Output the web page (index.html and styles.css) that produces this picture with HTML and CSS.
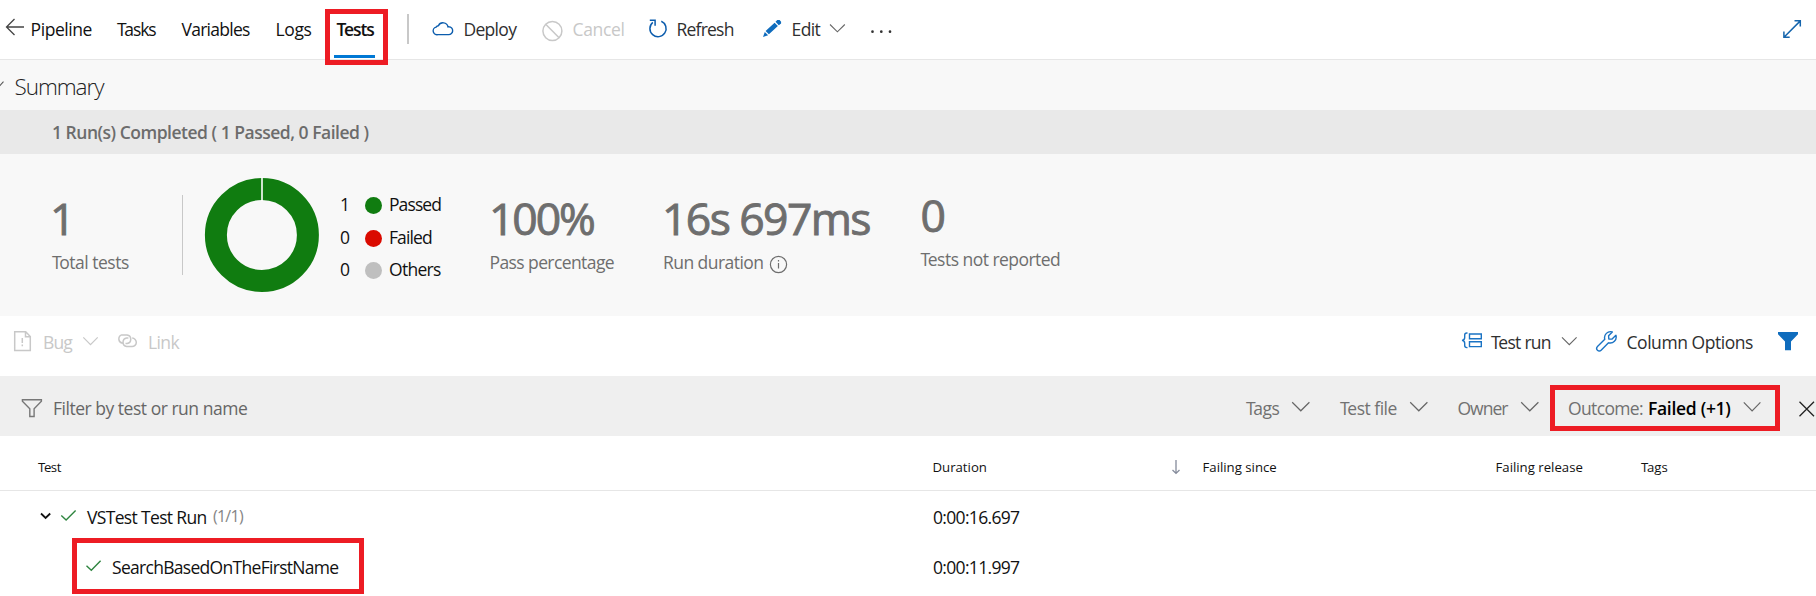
FILE: index.html
```html
<!DOCTYPE html>
<html lang="en">
<head>
<meta charset="utf-8">
<title>Release tests</title>
<link rel="stylesheet" href="styles.css">
</head>
<body>
<main class="page">
  <nav class="nav">
    <svg class="icon" width="30" height="59" viewBox="0 0 30 59"><path d="M24 27H6.5M14.5 19L6.5 27l8 8" fill="none" stroke="#444" stroke-width="1.3"/></svg>
    <span class="pipeline">Pipeline</span>
    <span class="tasks cap">Tasks</span>
    <span class="variables">Variables</span>
    <span class="logs">Logs</span>
    <span class="tests cap active">Tests</span>
    <i class="separator"></i>
    <svg class="icon" width="24" height="59" viewBox="432 0 24 59"><path d="M439 34.6h10.6a3.9 3.9 0 0 0 .3-7.8a1.8 1.8 0 0 0-.9.1a5.1 5.1 0 0 0-9.6-1.2a3 3 0 0 0-2.3 1.4a3.8 3.8 0 0 0 1.9 7.5z" fill="none" stroke="#0b5cad" stroke-width="1.4"/></svg>
    <span class="deploy dark">Deploy</span>
    <svg class="icon" width="24" height="59" viewBox="542 0 24 59"><g fill="none" stroke="#c8c8c8" stroke-width="1.5"><circle cx="553.4" cy="31" r="9.5"/><path d="M546.7 24.3l13.4 13.4"/></g></svg>
    <span class="cancel muted">Cancel</span>
    <svg class="icon" width="22" height="59" viewBox="648 0 22 59"><path d="M662.3 21.2a8.1 8.1 0 1 1-8.5 1.2M650.8 20.3h5.3v5.4" fill="none" stroke="#0b5cad" stroke-width="1.5"/></svg>
    <span class="refresh dark">Refresh</span>
    <svg class="icon" width="22" height="59" viewBox="762 0 22 59"><path d="M764 37l1.8-5l3.3 3.2zM766.6 31l9-8.3l3.3 3.3l-9 8.3zM776.5 21.8l1.8-1.7h2.3l1.5 1.6v1.9l-2.3 1.7z" fill="#0f6cbd"/></svg>
    <span class="edit dark">Edit</span>
    <svg class="icon" width="20" height="59" viewBox="829 0 20 59"><path d="M831 24.5l7.4 7.3l7.4-7.3" fill="none" stroke="#666" stroke-width="1.1"/></svg>
    <svg class="icon" width="26" height="59" viewBox="870 0 26 59"><g fill="#333"><circle cx="873.5" cy="31.7" r="1.35"/><circle cx="882.3" cy="31.7" r="1.35"/><circle cx="891" cy="31.7" r="1.35"/></g></svg>
    <svg class="icon" width="24" height="59" viewBox="1782 0 24 59"><path d="M1785 37.2l16.3-16.3M1795.5 20.8h5.8v5.8M1784.9 31.4v5.8h5.8" fill="none" stroke="#1565ad" stroke-width="1.5"/></svg>
  </nav>

  <section class="summary">
    <header class="summary-title">
      <svg class="icon" width="12" height="50" viewBox="0 60 12 50"><path d="M-4.5 82l3.5 4.5l4.5-4.8" fill="none" stroke="#555" stroke-width="1.1"/></svg>
      <span class="heading">Summary</span>
    </header>
    <div class="runs">1 Run(s) Completed ( 1 Passed, 0 Failed )</div>
    <div class="stats">
      <div class="stat total"><b>1</b><span class="cap">Total tests</span></div>
      <i class="rule"></i>
      <svg class="icon" width="120" height="162" viewBox="201.7 154 120 162"><circle cx="261.6" cy="235" r="46" fill="none" stroke="#107c10" stroke-width="22"/><path d="M261.7 177v24" stroke="#fff" stroke-width="1.6"/></svg>
      <div class="legend">
        <span class="count">1</span><i class="dot passed"></i><span>Passed</span>
        <span class="count">0</span><i class="dot failed"></i><span>Failed</span>
        <span class="count">0</span><i class="dot others"></i><span class="others-label">Others</span>
      </div>
      <div class="stat percent"><b>100%</b><span>Pass percentage</span></div>
      <div class="stat duration"><b>16s 697ms</b><span>Run duration<svg class="info" width="19" height="19" viewBox="0 0 19 19"><circle cx="9.5" cy="9.5" r="8.1" fill="none" stroke="#6e6e6e" stroke-width="1.2"/><path d="M9.5 8v5.5M9.5 5v1.5" stroke="#6e6e6e" stroke-width="1.2"/></svg></span></div>
      <div class="stat unreported"><b>0</b><span class="cap">Tests not reported</span></div>
    </div>
  </section>

  <div class="toolbar">
    <svg class="icon" width="20" height="60" viewBox="13 316 20 60"><path d="M14.7 331.7h11l4.6 4.8v14H14.7zM25.5 331.7v5h5M22.3 338v5M22.3 344.6v1.6" fill="none" stroke="#c8c8c8" stroke-width="1.5"/></svg>
    <span class="bug muted">Bug</span>
    <svg class="icon" width="20" height="60" viewBox="81 316 20 60"><path d="M83.3 337.3l7.2 7.4l7.2-7.4" fill="none" stroke="#c8c8c8" stroke-width="1.2"/></svg>
    <svg class="icon" width="24" height="60" viewBox="116 316 24 60"><path d="M123.5 343.2a4.3 4.3 0 0 1-.8-8.3h5.4a4.3 4.3 0 0 1 0 8.5h-1.6M133.2 338.1a4.2 4.2 0 0 1-.2 8.4h-5.3a4.3 4.3 0 0 1 0-8.5h1.7" fill="none" stroke="#c8c8c8" stroke-width="1.5"/></svg>
    <span class="link muted">Link</span>
    <svg class="icon" width="24" height="60" viewBox="1460 316 24 60"><path d="M1469.5 334h11.8v4.8h-11.8zM1469.5 341.8h11.8v4.8h-11.8zM1467.5 333h-.6c-1.6 0-2.2.7-2.2 2v2.6c0 1.6-.8 2.6-2.7 2.8c1.9.2 2.7 1.2 2.7 2.8v2.4c0 1.3.6 2 2.2 2h.6" fill="none" stroke="#1a73c4" stroke-width="1.4"/></svg>
    <span class="test-run cap dark">Test run</span>
    <svg class="icon" width="20" height="60" viewBox="1560 316 20 60"><path d="M1562 337.3l7.3 7.4l7.3-7.4" fill="none" stroke="#666" stroke-width="1.1"/></svg>
    <svg class="icon" width="24" height="60" viewBox="1595 316 24 60"><path d="M1612.3 331.9a6 6 0 0 0-7.5 7.4l-7.3 7.3a2.5 2.5 0 0 0 3.6 3.6l7.4-7.4a6 6 0 0 0 7.4-7.5l-3.8 3.8l-3.3-.1l-.2-3.3z" fill="none" stroke="#1a73c4" stroke-width="1.4" stroke-linejoin="round"/></svg>
    <span class="columns dark">Column Options</span>
    <svg class="icon" width="24" height="60" viewBox="1776 316 24 60"><path d="M1778 332h20v2.2l-7 7.2v8.8h-6v-8.8l-7-7.2z" fill="#0f6cbd"/></svg>
  </div>

  <div class="filters">
    <svg class="icon" width="26" height="60" viewBox="19 376 26 60"><path d="M22.4 399.7h19v1.6l-7.3 7.4v7.8h-4.3v-7.8l-7.4-7.4z" fill="none" stroke="#777" stroke-width="1.4"/></svg>
    <span class="search">Filter by test or run name</span>
    <span class="tags cap gray">Tags</span>
    <svg class="icon" width="22" height="60" viewBox="0 0 22 60"><path d="M2.2 26.3l8.6 8.5l8.6-8.5" fill="none" stroke="#666" stroke-width="1.2"/></svg>
    <span class="file cap gray">Test file</span>
    <svg class="icon" width="22" height="60" viewBox="0 0 22 60"><path d="M2.2 26.3l8.6 8.5l8.6-8.5" fill="none" stroke="#666" stroke-width="1.2"/></svg>
    <span class="owner gray">Owner</span>
    <svg class="icon" width="22" height="60" viewBox="0 0 22 60"><path d="M2.2 26.3l8.6 8.5l8.6-8.5" fill="none" stroke="#666" stroke-width="1.2"/></svg>
    <span class="outcome gray">Outcome:</span>
    <span class="outcome-value">Failed (+1)</span>
    <svg class="icon" width="22" height="60" viewBox="0 0 22 60"><path d="M2.8 26.3l8.3 8.5l8.3-8.5" fill="none" stroke="#666" stroke-width="1.2"/></svg>
    <svg class="icon" width="19" height="60" viewBox="1797 376 19 60"><path d="M1799.5 401.8l14.5 14.5M1814 401.8l-14.5 14.5" stroke="#222" stroke-width="1.3"/></svg>
  </div>

  <div class="row head">
    <span class="h-test cap">Test</span>
    <span class="h-duration">Duration</span>
    <svg class="icon" width="14" height="54" viewBox="1169 436 14 54"><path d="M1176 460v13M1172.5 470l3.5 3.4l3.5-3.4" fill="none" stroke="#858b9b" stroke-width="1.3"/></svg>
    <span class="h-since">Failing since</span>
    <span class="h-release">Failing release</span>
    <span class="h-tags cap">Tags</span>
  </div>
  <div class="row run">
    <svg class="icon" width="40" height="50" viewBox="39 491 40 50"><path d="M41 513.5l4.6 4.4l4.6-4.4" fill="none" stroke="#111" stroke-width="1.8"/><path d="M61.3 515.6l4.8 4.5l9.5-9.7" fill="none" stroke="#2f8540" stroke-width="1.4"/></svg>
    <span class="run-name">VSTest Test Run</span>
    <span class="run-count">(1/1)</span>
    <span class="time">0:00:16.697</span>
  </div>
  <div class="row case">
    <svg class="icon" width="20" height="50" viewBox="84 541 20 50"><path d="M86.5 565.8l4.8 4.5l9.3-9.6" fill="none" stroke="#2f8540" stroke-width="1.4"/></svg>
    <span class="case-name">SearchBasedOnTheFirstName</span>
    <span class="time">0:00:11.997</span>
  </div>

  <i class="mark mark-tests"></i>
  <i class="mark mark-outcome"></i>
  <i class="mark mark-case"></i>
</main>
</body>
</html>
```
FILE: styles.css
```css
* { box-sizing: border-box; }

body {
  margin: 0;
  background: #fff;
  color: #111;
  font: 17.5px/24px "Open Sans", "Noto Sans", sans-serif;
}

.page { position: relative; width: 1816px; height: 596px; overflow: hidden; }
span { display: block; white-space: nowrap; }
.icon { display: block; }
.dark { color: #2f2f2f; }
.gray { color: #717171; }
.muted { color: #c8c8c8; }
.cap::first-letter { letter-spacing: -2.3px; }

/* Top navigation */
.nav {
  display: grid;
  grid-template-columns: 30.6px 86.4px 64.5px 94px 61px 71px 24px 32px 78px 31px 75px 29px 85px 30px 37px 41px 912px 34px;
  height: 60px;
  border-bottom: 1px solid #e6e6e6;
}
.nav > span { padding-top: 17px; }
.nav > .icon:last-child { grid-column: 18; }
.pipeline { letter-spacing: -.45px; }
.tasks { letter-spacing: -1.1px; }
.variables { letter-spacing: -.73px; }
.logs { letter-spacing: -.35px; }
.tests { letter-spacing: -1.1px; }
.active { width: 41px; height: 58px; margin-left: -2px; padding-left: 2px; border-bottom: 3px solid #0078d4; font-weight: 600; }
.separator { width: 2px; height: 30px; margin-top: 14px; margin-left: -.5px; background: #c8c8c8; }
.deploy { letter-spacing: -.7px; }
.cancel { letter-spacing: -.33px; }
.refresh { letter-spacing: -.78px; }
.edit { letter-spacing: -.57px; }

/* Summary */
.summary { height: 256px; background: #f8f8f8; }
.summary-title { display: flex; height: 50px; }
.heading { padding: 15px 0 0 2.5px; font-size: 22.5px; font-weight: 300; letter-spacing: -1.05px; color: #222; }
.runs { height: 44px; padding: 10px 0 0 52px; background: #e9e9e9; color: #6c6c6c; font-weight: 600; letter-spacing: -.49px; }
.stats {
  display: grid;
  grid-template-columns: 52px 130px 19.7px 138.3px 149px 174px 257.5px 1fr;
  height: 162px;
}
.total { grid-column: 2; }
.stat { display: grid; grid-template-rows: 48px 24px; align-content: start; row-gap: 8px; padding-top: 40px; color: #6e6e6e; }
.stat b { font-size: 44.5px; font-weight: 400; line-height: 48px; letter-spacing: -1.6px; -webkit-text-stroke: .9px #6e6e6e; }
.total b { margin-left: -2px; }
.total span { letter-spacing: -.5px; }
.rule { width: 1px; height: 80px; margin-top: 41px; background: #c8c8c8; }
.legend {
  display: grid;
  grid-template-columns: 25px 24px 60px;
  grid-template-rows: 32.5px 32.5px 32.5px;
  padding-top: 38px;
  color: #111;
  letter-spacing: -.9px;
}
.others-label { letter-spacing: -.7px; }
.dot { width: 17px; height: 17px; margin-top: 5px; border-radius: 50%; }
.passed { background: #107c10; }
.failed { background: #da0a00; }
.others { background: #bfbfbf; }
.percent b { letter-spacing: -2.1px; }
.percent span { padding-left: .5px; letter-spacing: -.59px; }
.duration b { margin-left: -1px; }
.duration span { display: flex; letter-spacing: -.55px; }
.info { margin: 5px 0 0 5.5px; }
.unreported { padding-top: 37px; }
.unreported span { letter-spacing: -.53px; }

/* Result toolbar */
.toolbar {
  display: grid;
  grid-template-columns: 13px 30px 38px 34px 33px 1311.5px 31.5px 69px 35px 31.5px 149.5px 40px;
  height: 60px;
}
.toolbar > .icon:first-child { grid-column: 2; }
.toolbar > span { padding-top: 14px; }
.bug { letter-spacing: -.9px; }
.link { letter-spacing: -.6px; }
.test-run { letter-spacing: -.72px; }
.columns { letter-spacing: -.45px; }

/* Filter bar */
.filters {
  display: grid;
  grid-template-columns: 19px 34px 1193px 44px 50px 68px 49.5px 61.5px 49px 80px 93px 56px 19px;
  height: 60px;
  background: #efefef;
}
.filters > .icon:first-child { grid-column: 2; }
.filters > span { padding-top: 20px; }
.search { color: #666; letter-spacing: -.48px; }
.tags { letter-spacing: -.5px; }
.file { letter-spacing: -.5px; }
.owner { letter-spacing: -1px; }
.outcome { letter-spacing: -.64px; }
.outcome-value { color: #000; font-weight: 600; letter-spacing: -.3px; }

/* Result table */
.row { display: grid; height: 50px; }
.head {
  grid-template-columns: 38px 894.5px 236.5px 33.5px 293px 145.5px 1fr;
  height: 55px;
  border-bottom: 1px solid #e6e6e6;
  font-size: 13.2px;
}
.head > span { padding-top: 19px; }
.h-test { grid-column: 2; letter-spacing: -.5px; }
.h-test::first-letter, .h-tags::first-letter { letter-spacing: -1.3px; }
.run { grid-template-columns: 39px 48px 126px 720px 1fr; }
.run > .icon { grid-column: 2; }
.run > span { padding-top: 14px; }
.run-name { letter-spacing: -.66px; }
.run .run-count { padding-top: 13px; color: #858585; font-size: 16px; letter-spacing: -.75px; }
.case { grid-template-columns: 84px 28px 821px 1fr; }
.case > .icon { grid-column: 2; }
.case > span { padding-top: 14px; }
.case-name { letter-spacing: -.7px; }
.time { letter-spacing: -.68px; }

/* Callout frames laid over the page */
.mark { position: absolute; border: 5px solid #ed1c24; }
.mark-tests { left: 325px; top: 9px; width: 63px; height: 56px; }
.mark-outcome { left: 1550px; top: 385px; width: 230px; height: 46px; }
.mark-case { left: 72px; top: 538px; width: 292px; height: 56px; }
```
